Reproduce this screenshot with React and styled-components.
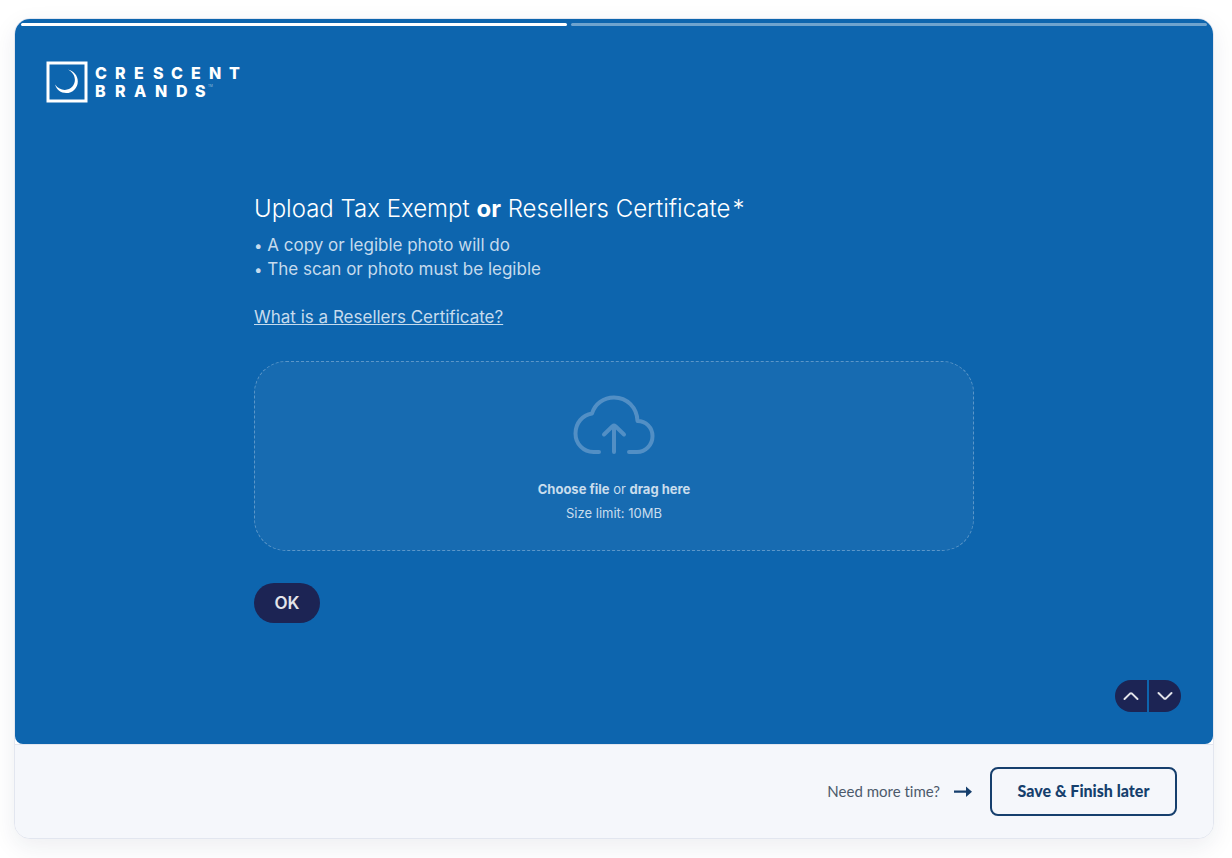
import React from "react";
import styled, { createGlobalStyle } from "styled-components";

const GlobalStyle = createGlobalStyle`
  * {
    box-sizing: border-box;
  }

  body {
    margin: 0;
    background-color: #fff;
    font-family: Lato, "Liberation Sans", sans-serif;
    font-variant-ligatures: none;
  }

  b {
    font-weight: 700;
  }
`;

const Page = styled.div`
  min-height: 100vh;
  display: flex;
  padding: 18px 18px 19px 14px;
`;

const Card = styled.div`
  flex: 1;
  display: flex;
  flex-direction: column;
  overflow: hidden;
  border: 1px solid #e2e6ef;
  border-radius: 16px;
  background-color: #fff;
  box-shadow: 0 8px 24px rgba(20, 40, 80, 0.08);
`;

const FormPanel = styled.div`
  flex: 1;
  display: flex;
  flex-direction: column;
  padding: 4px 6px 32px;
  border-radius: 0 0 8px 8px;
  background-color: #0d65ae;
  font-family: Inter, "Liberation Sans", sans-serif;
`;

const Progress = styled.div`
  display: flex;
  gap: 4px;
`;

const ProgressStep = styled.div`
  flex: ${({ $size }) => $size};
  height: 3px;
  border-radius: 2px;
  background-color: ${({ $done }) => ($done ? "#fff" : "#6ea3ce")};
`;

const Header = styled.header`
  padding: 35px 25px 0;
`;

const Logo = styled.svg`
  display: block;
  width: 200px;
  height: 42px;
`;

const LogoText = styled.text`
  fill: #fff;
  font-size: 16px;
  font-weight: 800;
`;

const Main = styled.main`
  flex: 1;
  display: flex;
  flex-direction: column;
  justify-content: center;
  width: 100%;
  max-width: 720px;
  margin: 0 auto;
  padding-top: 32px;
`;

const Title = styled.h1`
  margin: 0 0 8px;
  color: #fff;
  font-size: 24px;
  font-weight: 300;
  line-height: 33px;
`;

const Required = styled.span`
  margin-left: 2px;
`;

const Description = styled.div`
  color: #c6dbed;
  font-size: 17px;
  line-height: 24px;
`;

const Line = styled.p`
  margin: 0;
`;

const Bullet = styled.span`
  font-size: 15px;
  line-height: 1;
`;

const HelpLink = styled.a`
  display: inline-block;
  margin: 24px 0 32px;
  color: inherit;
  text-decoration: underline;
`;

const DropZone = styled.label`
  display: flex;
  flex-direction: column;
  align-items: center;
  height: 190px;
  padding-top: 33px;
  border: 1px dashed #5b96c8;
  border-radius: 32px;
  background-color: #176bb1;
  color: #c9dded;
  font-size: 13px;
  line-height: 24px;
  cursor: pointer;
`;

const FileInput = styled.input`
  position: absolute;
  width: 1px;
  height: 1px;
  opacity: 0;
`;

const CloudIcon = styled.svg`
  width: 82px;
  height: 60px;
  margin-bottom: 22px;
`;

const OkButton = styled.button`
  align-self: flex-start;
  width: 66px;
  height: 40px;
  margin-top: 32px;
  padding: 0;
  border: none;
  border-radius: 20px;
  background-color: #1c2454;
  color: #e3e4ea;
  font-family: inherit;
  font-size: 17px;
  font-weight: 600;
  cursor: pointer;
`;

const Nav = styled.nav`
  display: flex;
  justify-content: flex-end;
  gap: 2px;
  padding-right: 26px;
`;

const NavButton = styled.button`
  display: flex;
  align-items: center;
  justify-content: center;
  width: 32px;
  height: 32px;
  padding: 0;
  border: none;
  border-radius: ${({ $side }) =>
    $side === "left" ? "16px 0 0 16px" : "0 16px 16px 0"};
  background-color: #1c2454;
  cursor: pointer;
`;

const Footer = styled.footer`
  display: flex;
  align-items: center;
  justify-content: flex-end;
  padding: 22px 36px;
  border-top: 1px solid #e2e6ef;
  background-color: #f5f7fb;
`;

const FooterText = styled.span`
  padding-bottom: 2px;
  color: #4c5a6b;
  font-size: 15px;
`;

const ArrowIcon = styled.svg`
  width: 18px;
  height: 12px;
  margin: 0 18px 0 14px;
`;

const SaveButton = styled.button`
  min-width: 187px;
  height: 49px;
  padding: 0 24px 2px;
  border: 2px solid #163f6d;
  border-radius: 8px;
  background-color: transparent;
  color: #163f6d;
  font-family: inherit;
  font-size: 16px;
  font-weight: 900;
  cursor: pointer;
`;

const CrescentLogo = () => (
  <Logo viewBox="0 0 200 42" role="img" aria-label="Crescent Brands">
    <rect x="2" y="2" width="38" height="38" fill="none" stroke="#fff" strokeWidth="3" />
    <path
      d="M22 8.6C28 10.2 31.8 15 31.8 20.4C31.8 27 26.6 32.1 20.2 32.1C14.8 32.1 10.5 28.8 9 23.6C12 27.6 15.3 29 19 28.9C25 28.7 28.9 24.2 28.9 18.8C28.9 14.6 26.4 11 22 8.6Z"
      fill="#fff"
    />
    <LogoText y="18" x="49 69 88 107 125 145 163 183">
      CRESCENT
    </LogoText>
    <LogoText y="36" x="49 69 88 109 130 149">
      BRANDS
    </LogoText>
    <text x="162" y="26" fill="#9fc1df" fontSize="3">
      TM
    </text>
  </Logo>
);

const Chevron = ({ d }) => (
  <svg width="16" height="10" viewBox="0 0 16 10" fill="none" aria-hidden="true">
    <path
      d={d}
      stroke="#e3e4ea"
      strokeWidth="2"
      strokeLinecap="round"
      strokeLinejoin="round"
    />
  </svg>
);

const App = () => {
  return (
    <>
      <GlobalStyle />
      <Page>
        <Card>
          <FormPanel>
            <Progress>
              <ProgressStep $size={6} $done />
              <ProgressStep $size={7} />
            </Progress>

            <Header>
              <CrescentLogo />
            </Header>

            <Main>
              <Title>
                Upload Tax Exempt <b>or</b> Resellers Certificate
                <Required>*</Required>
              </Title>
              <Description>
                <Line>
                  <Bullet>•</Bullet> A copy or legible photo will do
                </Line>
                <Line>
                  <Bullet>•</Bullet> The scan or photo must be legible
                </Line>
                <HelpLink href="#resellers-certificate">
                  What is a Resellers Certificate?
                </HelpLink>
              </Description>

              <DropZone htmlFor="certificate">
                <FileInput id="certificate" type="file" />
                <CloudIcon viewBox="0 0 82 60" fill="none" aria-hidden="true">
                  <path
                    d="M26 57H20.5C10.5 57 2.5 49 2.5 38.5C2.5 28 9.5 20 19 18.5C22 9 30.5 2.5 41 2.5C54 2.5 64 12.5 64.5 26C73 26 79.5 32.5 79.5 41C79.5 50 72.5 57 64 57H56"
                    stroke="#528fc5"
                    strokeWidth="4"
                    strokeLinecap="round"
                    strokeLinejoin="round"
                  />
                  <path
                    d="M41 57V31M31 39.5L39.5 31.2Q41 30 42.5 31.2L51 39.5"
                    stroke="#528fc5"
                    strokeWidth="4"
                    strokeLinecap="round"
                    strokeLinejoin="round"
                  />
                </CloudIcon>
                <Line>
                  <b>Choose file</b> or <b>drag here</b>
                </Line>
                <Line>Size limit: 10MB</Line>
              </DropZone>

              <OkButton type="button">OK</OkButton>
            </Main>

            <Nav aria-label="Questions">
              <NavButton type="button" $side="left" aria-label="Previous">
                <Chevron d="M1.5 8L7 2.6Q8 1.8 9 2.6L14.5 8" />
              </NavButton>
              <NavButton type="button" $side="right" aria-label="Next">
                <Chevron d="M1.5 2L7 7.4Q8 8.2 9 7.4L14.5 2" />
              </NavButton>
            </Nav>
          </FormPanel>

          <Footer>
            <FooterText>Need more time?</FooterText>
            <ArrowIcon viewBox="0 0 18 12" aria-hidden="true">
              <path d="M0 4.6H12V0.5L18 5.7L12 11V6.8H0Z" fill="#163f6d" />
            </ArrowIcon>
            <SaveButton type="button">Save &amp; Finish later</SaveButton>
          </Footer>
        </Card>
      </Page>
    </>
  );
};

export default App;
